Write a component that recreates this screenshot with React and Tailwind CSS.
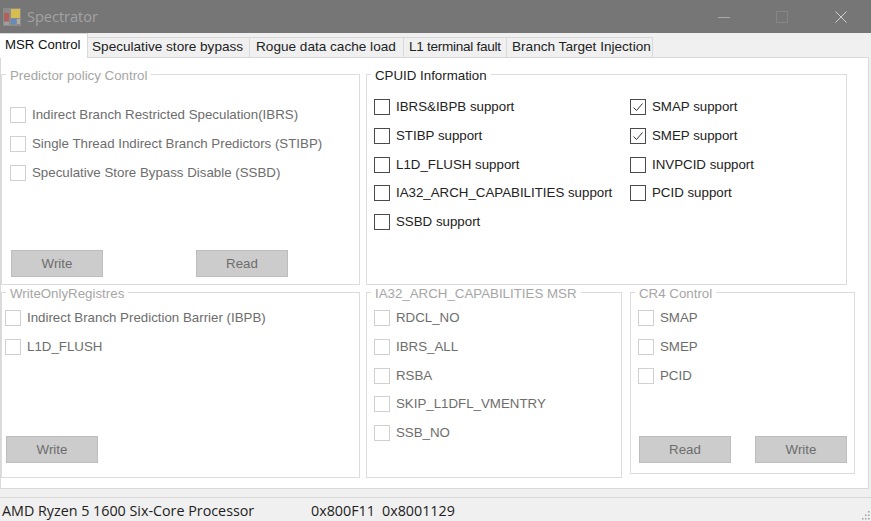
import React from 'react';

const uiFont = "font-['Liberation_Sans',Arial,sans-serif]";

function AppIcon() {
  return (
    <svg width="18" height="18" viewBox="0 0 18 18" className="opacity-85">
      <rect x="0" y="0" width="18" height="18" fill="#8f8f8f" />
      <rect x="8" y="1" width="9" height="9" fill="#e8c94a" />
      <rect x="1" y="5" width="5" height="8" fill="#c25a55" />
      <rect x="8" y="11" width="5" height="5" fill="#5f8fd0" />
      <rect x="14" y="11" width="3" height="5" fill="#b8b8b8" />
      <rect x="1" y="14" width="5" height="3" fill="#a5a5a5" />
    </svg>
  );
}

function TitleBar() {
  return (
    <div className="h-[33px] shrink-0 bg-[#767676] flex items-center pl-[3px]">
      <AppIcon />
      <span className="ml-[6px] text-[14.5px] text-[#a3a3a3] font-['Open_Sans',sans-serif]">Spectrator</span>
      <div className="ml-auto flex items-center pr-[24px]">
        <svg width="12" height="12" viewBox="0 0 12 12" className="mr-[46px]">
          <path d="M0 6.5H12" stroke="#a8a8a8" strokeWidth="1" />
        </svg>
        <svg width="12" height="12" viewBox="0 0 12 12" className="mr-[47px]">
          <rect x="0.5" y="0.5" width="11" height="11" fill="none" stroke="#868686" strokeWidth="1" />
        </svg>
        <svg width="12" height="12" viewBox="0 0 12 12">
          <path d="M0.5 0.5L11.5 11.5M11.5 0.5L0.5 11.5" stroke="#cfcfcf" strokeWidth="1" />
        </svg>
      </div>
    </div>
  );
}

function Tab({ label, width, active, pad = 'pl-[5px]' }) {
  if (active) {
    return (
      <div style={{ width }} className="h-[25px] bg-white border-t border-r border-[#d9d9d9] pl-[5px] pt-[2px] text-[13.2px] leading-[18px] text-[#111] whitespace-nowrap relative z-10">
        {label}
      </div>
    );
  }
  return (
    <div style={{ width }} className={`h-[21px] mt-[4px] bg-[#f0f0f0] border-t border-r border-[#d9d9d9] ${pad} text-[13.6px] leading-[18px] text-[#222] whitespace-nowrap`}>
      {label}
    </div>
  );
}

function Check({ label, checked, disabled }) {
  return (
    <div className="flex items-center h-[28.7px]">
      <span className={`w-[16px] h-[16px] shrink-0 border flex items-center justify-center ${disabled ? 'border-[#d0d0d0]' : 'border-[#4a4a4a]'}`}>
        {checked && (
          <svg width="12" height="12" viewBox="0 0 12 12">
            <path d="M1.5 6.5L4.5 9.5L10.5 2.5" fill="none" stroke="#333" strokeWidth="1" />
          </svg>
        )}
      </span>
      <span className={`ml-[6px] text-[13.3px] whitespace-nowrap ${disabled ? 'text-[#6d6d6d]' : 'text-[#222]'}`}>{label}</span>
    </div>
  );
}

function Btn({ label }) {
  return (
    <div className="w-[92px] h-[27px] bg-[#cccccc] border border-[#bdbdbd] flex items-center justify-center text-[13.3px] text-[#6d6d6d]">
      {label}
    </div>
  );
}

function Group({ title, disabled, className, children }) {
  return (
    <div className={`relative border border-[#dcdcdc] flex flex-col ${className}`}>
      <span className={`absolute left-[4px] top-[-8px] bg-white px-[4px] text-[13.3px] leading-[16px] pt-[1px] whitespace-nowrap ${disabled ? 'text-[#a6a6a6]' : 'text-[#222]'}`}>
        {title}
      </span>
      {children}
    </div>
  );
}

export default function App() {
  return (
    <div className={`w-[871px] h-[521px] overflow-hidden bg-[#f0f0f0] flex flex-col ${uiFont}`}>
      <TitleBar />
      <div className="flex h-[25px] shrink-0 -mb-px">
        <Tab label="MSR Control" width={88} active />
        <Tab label="Speculative store bypass" width={162} pad="pl-[4px]" />
        <Tab label="Rogue data cache load" width={154} pad="pl-[6px]" />
        <Tab label="L1 terminal fault" width={103} pad="pl-[5px] tracking-[-0.3px]" />
        <Tab label="Branch Target Injection" width={146} />
      </div>

      <div className="w-[869px] h-[432px] shrink-0 bg-white border border-[#d9d9d9] pt-[16px] flex flex-col">
        <div className="flex h-[211px] gap-[6px]">
          <Group title="Predictor policy Control" disabled className="w-[359px] pl-[8px] pr-[71px] pt-[26px] pb-[7px]">
            <Check disabled label="Indirect Branch Restricted Speculation(IBRS)" />
            <Check disabled label="Single Thread Indirect Branch Predictors (STIBP)" />
            <Check disabled label="Speculative Store Bypass Disable (SSBD)" />
            <div className="mt-auto ml-[1px] flex justify-between">
              <Btn label="Write" />
              <Btn label="Read" />
            </div>
          </Group>
          <Group title="CPUID Information" className="w-[481px] pl-[7px] pt-[18px]">
            <div className="flex">
              <div className="w-[256px]">
                <Check label="IBRS&IBPB support" />
                <Check label="STIBP support" />
                <Check label="L1D_FLUSH support" />
                <Check label="IA32_ARCH_CAPABILITIES support" />
                <Check label="SSBD support" />
              </div>
              <div>
                <Check checked label="SMAP support" />
                <Check checked label="SMEP support" />
                <Check label="INVPCID support" />
                <Check label="PCID support" />
              </div>
            </div>
          </Group>
        </div>

        <div className="flex mt-[7px] items-start">
          <Group title="WriteOnlyRegistres" disabled className="w-[359px] h-[186px] pl-[3px] pt-[11px] pb-[14px]">
            <Check disabled label="Indirect Branch Prediction Barrier (IBPB)" />
            <Check disabled label="L1D_FLUSH" />
            <div className="mt-auto ml-[1px]">
              <Btn label="Write" />
            </div>
          </Group>
          <Group title="IA32_ARCH_CAPABILITIES MSR" disabled className="ml-[6px] w-[256px] h-[186px] pl-[7px] pt-[11px]">
            <Check disabled label="RDCL_NO" />
            <Check disabled label="IBRS_ALL" />
            <Check disabled label="RSBA" />
            <Check disabled label="SKIP_L1DFL_VMENTRY" />
            <Check disabled label="SSB_NO" />
          </Group>
          <Group title="CR4 Control" disabled className="ml-[8px] w-[225px] h-[182px] pl-[7px] pr-[7px] pt-[11px] pb-[10px]">
            <Check disabled label="SMAP" />
            <Check disabled label="SMEP" />
            <Check disabled label="PCID" />
            <div className="mt-auto flex justify-between pl-[1px]">
              <Btn label="Read" />
              <Btn label="Write" />
            </div>
          </Group>
        </div>
      </div>

      <div className="mt-[8px] flex-1 border-t border-[#d9d9d9] relative flex items-center pl-[2px] pt-[2px] font-['Open_Sans',sans-serif] text-[14.3px] text-[#222]">
        <span className="w-[309px] whitespace-nowrap">AMD Ryzen 5 1600 Six-Core Processor</span>
        <span className="w-[71px]">0x800F11</span>
        <span>0x8001129</span>
        <svg width="10" height="10" viewBox="0 0 10 10" className="absolute right-[1px] bottom-[1px]">
          <path d="M8 1h1.5v1.5H8zM5 4.5h1.5V6H5zM8 4.5h1.5V6H8zM2 8h1.5v1.5H2zM5 8h1.5v1.5H5zM8 8h1.5v1.5H8z" fill="#a0a0a0" />
        </svg>
      </div>
    </div>
  );
}
